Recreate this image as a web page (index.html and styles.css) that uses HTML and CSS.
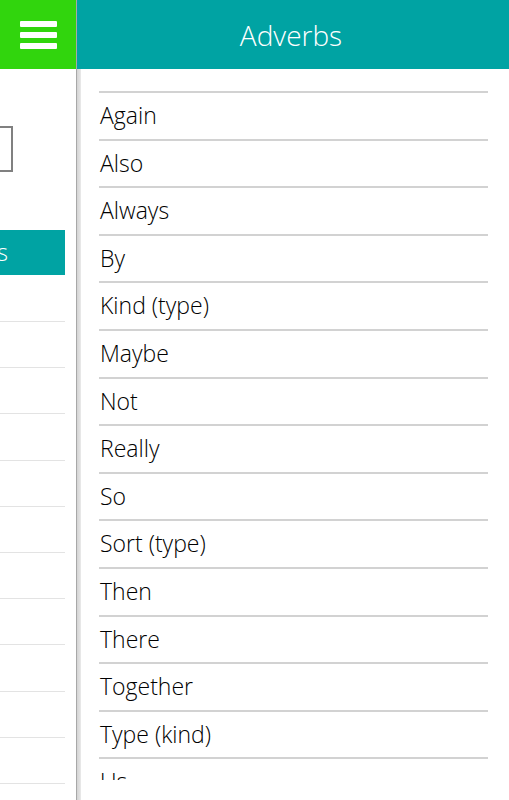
FILE: index.html
```html
<!DOCTYPE html>
<html>
<head>
<meta charset="utf-8">
<link rel="stylesheet" href="styles.css">
</head>
<body>
<div class="app">
  <aside class="side">
    <div class="side-head">
      <div class="burger"><span></span><span></span><span></span></div>
    </div>
    <div class="side-body">
      <div class="search"></div>
      <div class="side-btn"><span>Adverbs</span></div>
      <ul class="side-list">
        <li></li><li></li><li></li><li></li><li></li><li></li><li></li><li></li><li></li><li></li><li></li>
      </ul>
    </div>
  </aside>
  <div class="divider"></div>
  <main class="main">
    <header class="main-head">Adverbs</header>
    <div class="scroller">
      <ul class="words">
        <li>Again</li>
        <li>Also</li>
        <li>Always</li>
        <li>By</li>
        <li>Kind (type)</li>
        <li>Maybe</li>
        <li>Not</li>
        <li>Really</li>
        <li>So</li>
        <li>Sort (type)</li>
        <li>Then</li>
        <li>There</li>
        <li>Together</li>
        <li>Type (kind)</li>
        <li>Us</li>
      </ul>
    </div>
  </main>
</div>
</body>
</html>
```
FILE: styles.css
```css
* { box-sizing: border-box; }
html, body { margin: 0; padding: 0; background: #fff; }
body { font-family: "Open Sans", "Noto Sans", sans-serif; width: 509px; height: 800px; overflow: hidden; }
.app { display: flex; height: 800px; }
.side { width: 76px; flex: none; display: flex; flex-direction: column; overflow: hidden; }
.side-head { flex: none; height: 69px; background: #31d50d; display: flex; align-items: center; padding-left: 20px; }
.burger { display: flex; flex-direction: column; gap: 5px; }
.burger span { display: block; width: 37px; height: 6px; background: #fff; border-radius: 1px; }
.side-body { width: 65px; flex: none; }
.search { margin-top: 57px; width: 13px; height: 46px; border: 2px solid #808080; border-left: none; }
.side-btn { margin-top: 58px; height: 45px; background: #00a3a3; color: #fff; font-size: 23px; font-weight: 300; line-height: 45px; white-space: nowrap; overflow: hidden; display: flex; justify-content: flex-end; padding-right: 57px; }
.side-btn span { flex: none; }
.side-list { list-style: none; margin: 0; padding: 0; margin-top: 46px; }
.side-list li { height: 46.2px; border-top: 1px solid #e3e3e3; }
.divider { width: 5px; flex: none; background: linear-gradient(to right, #a8a8a8 0, #a8a8a8 1px, #d4d4d4 1px, #e2e2e2 4px, #ececec 5px); }
.main { flex: 1; display: flex; flex-direction: column; min-width: 0; }
.main-head { flex: none; height: 69px; background: #00a3a3; color: #fff; font-size: 28px; font-weight: 300; display: flex; align-items: center; justify-content: center; margin-left: -4px; padding-right: 4px; }
.scroller { height: 711px; overflow: hidden; padding: 22px 21px 0 18px; }
.words { list-style: none; margin: 0; padding: 0; }
.words li { height: 47.6px; border-top: 2px solid #d2d2d2; font-size: 23px; font-weight: 300; color: #000; padding-left: 1px; line-height: 45px; padding-top: 0; white-space: nowrap; }
```
